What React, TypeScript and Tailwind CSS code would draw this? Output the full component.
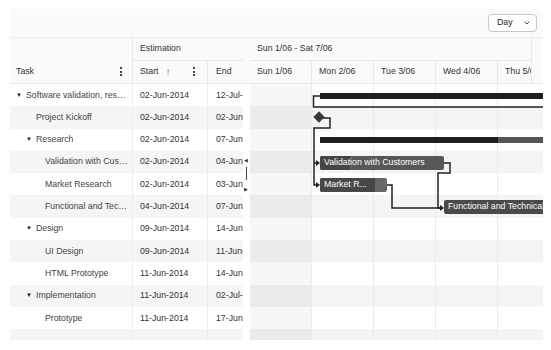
import { ChevronDown } from 'lucide-react';

type Task = {
  title: string;
  level: number;
  parent?: boolean;
  start: string;
  end: string;
};

const tasks: Task[] = [
  { title: 'Software validation, research and implementation', level: 0, parent: true, start: '02-Jun-2014', end: '12-Jul-2014' },
  { title: 'Project Kickoff', level: 1, start: '02-Jun-2014', end: '02-Jun-2014' },
  { title: 'Research', level: 1, parent: true, start: '02-Jun-2014', end: '07-Jun-2014' },
  { title: 'Validation with Customers', level: 2, start: '02-Jun-2014', end: '04-Jun-2014' },
  { title: 'Market Research', level: 2, start: '02-Jun-2014', end: '03-Jun-2014' },
  { title: 'Functional and Technical Specifications', level: 2, start: '04-Jun-2014', end: '07-Jun-2014' },
  { title: 'Design', level: 1, parent: true, start: '09-Jun-2014', end: '14-Jun-2014' },
  { title: 'UI Design', level: 2, start: '09-Jun-2014', end: '11-Jun-2014' },
  { title: 'HTML Prototype', level: 2, start: '11-Jun-2014', end: '14-Jun-2014' },
  { title: 'Implementation', level: 1, parent: true, start: '11-Jun-2014', end: '02-Jul-2014' },
  { title: 'Prototype', level: 2, start: '11-Jun-2014', end: '17-Jun-2014' },
  { title: '', level: 2, start: '', end: '' },
];

const days = ['Sun 1/06', 'Mon 2/06', 'Tue 3/06', 'Wed 4/06', 'Thu 5/06'];
const indent = ['pl-[6px]', 'pl-[16px]', 'pl-[25px]'];

function Dots() {
  return (
    <span className="flex flex-col gap-[1.5px]">
      <span className="w-[2px] h-[2px] bg-[#444]" />
      <span className="w-[2px] h-[2px] bg-[#444]" />
      <span className="w-[2px] h-[2px] bg-[#444]" />
    </span>
  );
}

function TreeList() {
  return (
    <div className="w-[233px] overflow-hidden shrink-0">
      <div className="w-[273px]">
        {/* header */}
        <div className="flex h-[46px] bg-[#fafafa] border-b border-[#e8e8e8]">
          <div className="w-[123px] flex flex-col justify-end border-r border-[#e8e8e8]">
            <div className="h-[23px] flex items-center justify-between pl-[6px] pr-[10px]">
              <span>Task</span>
              <Dots />
            </div>
          </div>
          <div className="w-[150px] flex flex-col">
            <div className="h-[23px] flex items-center pl-[7px] border-b border-[#e8e8e8]">Estimation</div>
            <div className="h-[23px] flex">
              <div className="w-[75px] flex items-center pl-[7px] pr-[12px] border-r border-[#e8e8e8]">
                <span>Start</span>
                <span className="ml-[7px] text-[#1a6fd1] text-[10px] font-bold leading-none">↑</span>
                <span className="ml-auto"><Dots /></span>
              </div>
              <div className="w-[75px] flex items-center pl-[8px]">End</div>
            </div>
          </div>
        </div>
        {/* body */}
        {tasks.map((t, i) => (
          <div key={i} className={`flex h-[22.3px] ${i % 2 === 1 ? 'bg-[#f5f5f5]' : 'bg-white'}`}>
            <div className={`w-[123px] flex items-center pr-[4px] border-r border-[#ececec] text-[#444] ${indent[t.level]}`}>
              <span className="w-[10px] shrink-0 text-[6px] text-[#222]">{t.parent && t.title ? '▼' : ''}</span>
              <span className="truncate">{t.title}</span>
            </div>
            <div className="w-[75px] flex items-center pl-[7px] border-r border-[#ececec]">{t.start}</div>
            <div className="w-[75px] flex items-center pl-[8px]">{t.end}</div>
          </div>
        ))}
      </div>
    </div>
  );
}

function Splitter() {
  return (
    <div className="w-[7px] shrink-0 bg-white flex flex-col">
      <div className="h-[46px] bg-[#fafafa] border-b border-[#e8e8e8]" />
      <div className="flex-1 flex flex-col items-center pt-[74px] text-[#333]">
        <span className="text-[5px] leading-none -ml-[2px]">◀</span>
        <span className="w-[1.5px] h-[13px] bg-[#444] mt-[4px]" />
        <span className="text-[5px] leading-none mt-[7px] -ml-[2px]">▶</span>
      </div>
    </div>
  );
}

function Bar({ left, top, width, progress, label, main, done }: { left: number; top: number; width: number; progress: number; label: string; main: string; done: string }) {
  return (
    <div
      className="absolute h-[14px] rounded-[2px] overflow-hidden flex items-center"
      style={{ left, top, width, background: main }}
    >
      <div className="absolute left-0 top-0 bottom-0" style={{ width: progress, background: done }} />
      <span className="relative pl-[4px] text-white text-[8.75px] whitespace-nowrap">{label}</span>
    </div>
  );
}

function Gantt() {
  return (
    <div className="w-[293px] overflow-hidden shrink-0">
      {/* header */}
      <div className="flex h-[46px] bg-[#fafafa] border-b border-[#e8e8e8]">
        <div className="w-[282px] flex flex-col border-r border-[#e8e8e8]">
          <div className="h-[23px] flex items-center pl-[7px] border-b border-[#e8e8e8] whitespace-nowrap">Sun 1/06 - Sat 7/06</div>
          <div className="h-[23px] flex overflow-hidden">
            {days.map((d) => (
              <div key={d} className="w-[62px] shrink-0 flex items-center pl-[7px] border-r border-[#e8e8e8] whitespace-nowrap">{d}</div>
            ))}
          </div>
        </div>
      </div>
      {/* body */}
      <div className="relative">
        {tasks.map((_, i) => (
          <div key={i} className={`flex h-[22.3px] ${i % 2 === 1 ? 'bg-[#f4f4f4]' : 'bg-white'}`}>
            {days.map((d, j) => (
              <div
                key={d}
                className={`w-[62px] shrink-0 border-r border-[#ebebeb] ${j === 0 ? (i % 2 === 1 ? 'bg-[#ebebeb]' : 'bg-[#f7f7f7]') : ''}`}
              />
            ))}
          </div>
        ))}

        {/* summary bars */}
        <div className="absolute left-[70px] top-[9px] w-[230px] h-[6px] bg-[#1f1f1f]" />
        <div className="absolute left-[70px] top-[53px] w-[230px] h-[6px] bg-[#555] flex">
          <div className="w-[178px] h-full bg-[#1f1f1f]" />
        </div>

        {/* milestone */}
        <div className="absolute left-[65px] top-[29px] w-[8px] h-[8px] rotate-45 bg-[#3a3a3a]" />

        <Bar left={70} top={72} width={124} progress={30} label="Validation with Customers" main="#575757" done="#454545" />
        <Bar left={70} top={94} width={67} progress={55} label="Market R..." main="#676767" done="#474747" />
        <Bar left={194} top={116} width={110} progress={0} label="Functional and Technical Specifications" main="#4a4a4a" done="#4a4a4a" />

        {/* dependency lines */}
        <svg className="absolute left-0 top-0" width="293" height="256" viewBox="0 0 293 256" fill="none">
          <g stroke="#222" strokeWidth="1.5">
            <polyline points="70,12 63.5,12 63.5,23 293,23" />
            <polyline points="73,34 80,34 80,44 64,44 64,101 67,101" />
            <line x1="64" y1="79" x2="67" y2="79" />
            <polyline points="194,79 200,79 200,89 188,89 188,124 191,124" />
            <polyline points="137,101 142,101 142,124 191,124" />
          </g>
          <g fill="#222">
            <polygon points="66,76 70,79 66,82" />
            <polygon points="66,98 70,101 66,104" />
            <polygon points="190,121 194,124 190,127" />
          </g>
        </svg>
      </div>
    </div>
  );
}

export default function App() {
  return (
    <div className="w-[551px] h-[350px] bg-white pl-[10px] pt-[9px] font-['Liberation_Sans',Arial,sans-serif] text-[8.75px] text-[#333]">
      <div className="w-[533px] h-[331px] flex flex-col overflow-hidden">
        <div className="h-[29px] shrink-0 bg-[#fafafa] border-b border-[#eeeeee] flex items-center justify-end pr-[6px]">
          <div className="w-[49px] h-[18px] bg-white border border-[#c8c8c8] rounded-[4px] flex items-center justify-between pl-[8px] pr-[5px] text-[#222]">
            <span>Day</span>
            <ChevronDown size={8} strokeWidth={2.5} />
          </div>
        </div>
        <div className="flex flex-1 min-h-0">
          <TreeList />
          <Splitter />
          <Gantt />
        </div>
      </div>
    </div>
  );
}
